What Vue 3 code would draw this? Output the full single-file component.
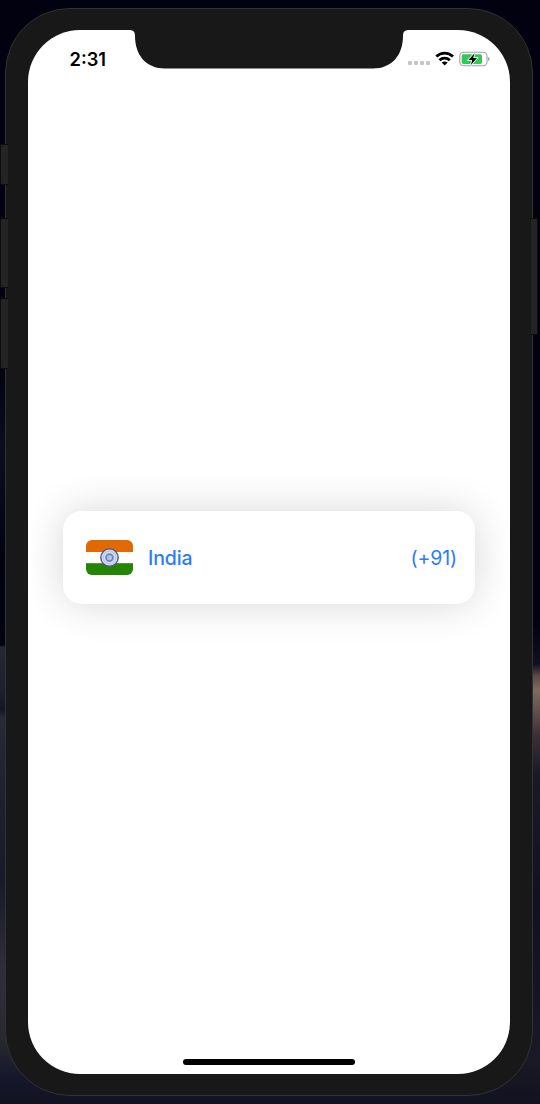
<script setup>
const country = { name: 'India', dialCode: '(+91)' }
const time = '2:31'
const dots = [0, 1, 2, 3]
</script>

<template>
  <main class="desktop">
    <i class="key mute"></i>
    <i class="key vol-up"></i>
    <i class="key vol-down"></i>
    <i class="key power"></i>

    <div class="phone">
      <div class="screen">
        <svg class="notch" width="280" height="39" viewBox="0 0 280 39">
          <path d="M0 0H280C275.500 0 274 2 274 6C274 25 263 38.500 244 38.500H36C17 38.500 6 25 6 6C6 2 4.500 0 0 0Z" fill="#181818" />
        </svg>

        <header class="status">
          <span class="time">{{ time }}</span>
          <div class="indicators">
            <div class="signal"><i v-for="d in dots" :key="d"></i></div>
            <svg class="wifi" width="20" height="16" viewBox="0 0 20 16">
              <g fill="none" stroke="#000" stroke-width="2.800">
                <path d="M1.300 5.600C6 1 13.300 1 18 5.600" />
                <path d="M4.500 9.200C7.400 6.400 11.900 6.400 14.800 9.200" />
              </g>
              <path d="M9.700 14.600L6.700 11.600C8.400 10.200 11 10.200 12.700 11.600Z" />
            </svg>
            <svg class="battery" width="32" height="18" viewBox="0 0 32 18">
              <rect x=".8" y="2.300" width="27.200" height="13.400" rx="3.800" fill="#fff" stroke="#a2a2a2" stroke-width="1.100" />
              <path d="M29.200 7C31 7.800 31 10.300 29.200 11.100Z" fill="#8c8c8c" />
              <rect x="2.700" y="4.200" width="20.300" height="9.700" rx="1.700" fill="#34c759" />
              <path d="M15.500 3.200L9.500 9.900H13.200L11.900 14.900L18 8.100H14.200Z" fill="#000" stroke="#fff" stroke-width="1.600" paint-order="stroke" />
            </svg>
          </div>
        </header>

        <section class="content">
          <button class="country" type="button">
            <svg class="flag" width="47" height="35" viewBox="0 0 47 35">
              <defs>
                <clipPath id="flag-shape"><rect width="47" height="35" rx="6" /></clipPath>
              </defs>
              <g clip-path="url(#flag-shape)">
                <rect width="47" height="35" fill="#fff" />
                <rect width="47" height="12" fill="#e26800" />
                <rect y="23.200" width="47" height="12" fill="#238500" />
              </g>
              <circle cx="23.500" cy="17.600" r="8.700" fill="#dfe4f5" stroke="#43568f" stroke-width="1.400" />
              <circle cx="23.500" cy="17.600" r="6.300" fill="none" stroke="#bac6e8" stroke-width="1.500" />
              <circle cx="23.500" cy="17.600" r="3.500" fill="#b4c1e4" stroke="#6f85bd" stroke-width="1.800" />
            </svg>
            <span class="name">{{ country.name }}</span>
            <span class="code">{{ country.dialCode }}</span>
          </button>
        </section>

        <div class="home"></div>
      </div>
    </div>
  </main>
</template>

<style>
body {
  margin: 0;
}
</style>

<style scoped>
.desktop {
  position: relative;
  box-sizing: border-box;
  width: 540px;
  height: 1104px;
  padding: 8px 7px 8px 5px;
  overflow: hidden;
  font-family: Inter, "Liberation Sans", sans-serif;
  background:
    linear-gradient(transparent 664px, #5c4a49 676px, #806a60 690px, #655250 710px, #3b3137 735px, #1a1823 775px, transparent 800px) 532px 0 / 8px 1104px no-repeat,
    linear-gradient(#01010f 0, #01010f 620px, #0e101c 660px, #181923 800px, #11121f 900px, #151622 1000px, #1a1a26 1060px, #11121f 1104px) 500px 0 / 40px 1104px no-repeat,
    linear-gradient(#01010f 0, #01010f 360px, #0c0d1d 450px, #02020f 560px, #04040f 645px, #272732 647px, #20202c 690px, #151624 710px, #292a34 717px, #22222e 780px, #191a27 880px, #302f37 970px, #28282f 1040px, #15162a 1080px, #11121f 1104px);
}

.key {
  position: absolute;
  box-sizing: border-box;
  left: 0;
  width: 8px;
  background: #242424;
  border: 1px solid #0d0d0f;
  border-right: 0;
  border-radius: 2px 0 0 2px;
  z-index: 2;
}
.mute { top: 144px; height: 41px; }
.vol-up { top: 218px; height: 70px; }
.vol-down { top: 298px; height: 71px; }
.power {
  left: 531px;
  top: 218px;
  width: 7px;
  height: 117px;
  border-right: 1px solid #0d0d0f;
  border-left: 0;
  border-radius: 0 2px 2px 0;
}

.phone {
  box-sizing: border-box;
  height: 1088px;
  padding: 21px 22px;
  background: #181818;
  border: 1px solid #323236;
  border-radius: 65px;
}

.screen {
  position: relative;
  display: flex;
  flex-direction: column;
  height: 1044px;
  background: #fff;
  border-radius: 52px;
  overflow: hidden;
}

.notch {
  position: absolute;
  top: 0;
  left: 101px;
}

.status {
  display: flex;
  justify-content: space-between;
  height: 58px;
  padding: 0 19px 0 41.500px;
}

.time {
  padding-top: 18px;
  font-size: 18.300px;
  line-height: 22px;
  font-weight: 600;
}

.indicators {
  display: flex;
  padding-top: 20px;
}

.signal {
  display: flex;
  gap: 2px;
  padding-top: 11px;
}
.signal i {
  width: 4px;
  height: 4px;
  border-radius: 1px;
  background: #c6c6c6;
}

.wifi {
  margin: 1px 0 0 5px;
}
.battery {
  margin-left: 4px;
}

.content {
  flex: 1;
  padding: 423px 35px 0;
}

.country {
  display: flex;
  align-items: center;
  box-sizing: border-box;
  width: 412px;
  height: 93px;
  padding: 0 18px 0 23px;
  border: 0;
  border-radius: 19px;
  background: #fff;
  box-shadow: 0 0 40px rgba(0, 0, 0, 0.16);
  color: #2a7df5;
  font-family: inherit;
  font-size: 19.500px;
  line-height: 24px;
}
.name {
  margin-left: 15px;
  font-weight: 550;
  letter-spacing: -0.150px;
}
.code {
  margin-left: auto;
  font-weight: 400;
  letter-spacing: -0.150px;
}

.home {
  width: 172px;
  height: 6px;
  margin: 0 auto 9px;
  border-radius: 3px;
  background: #000;
}
</style>
